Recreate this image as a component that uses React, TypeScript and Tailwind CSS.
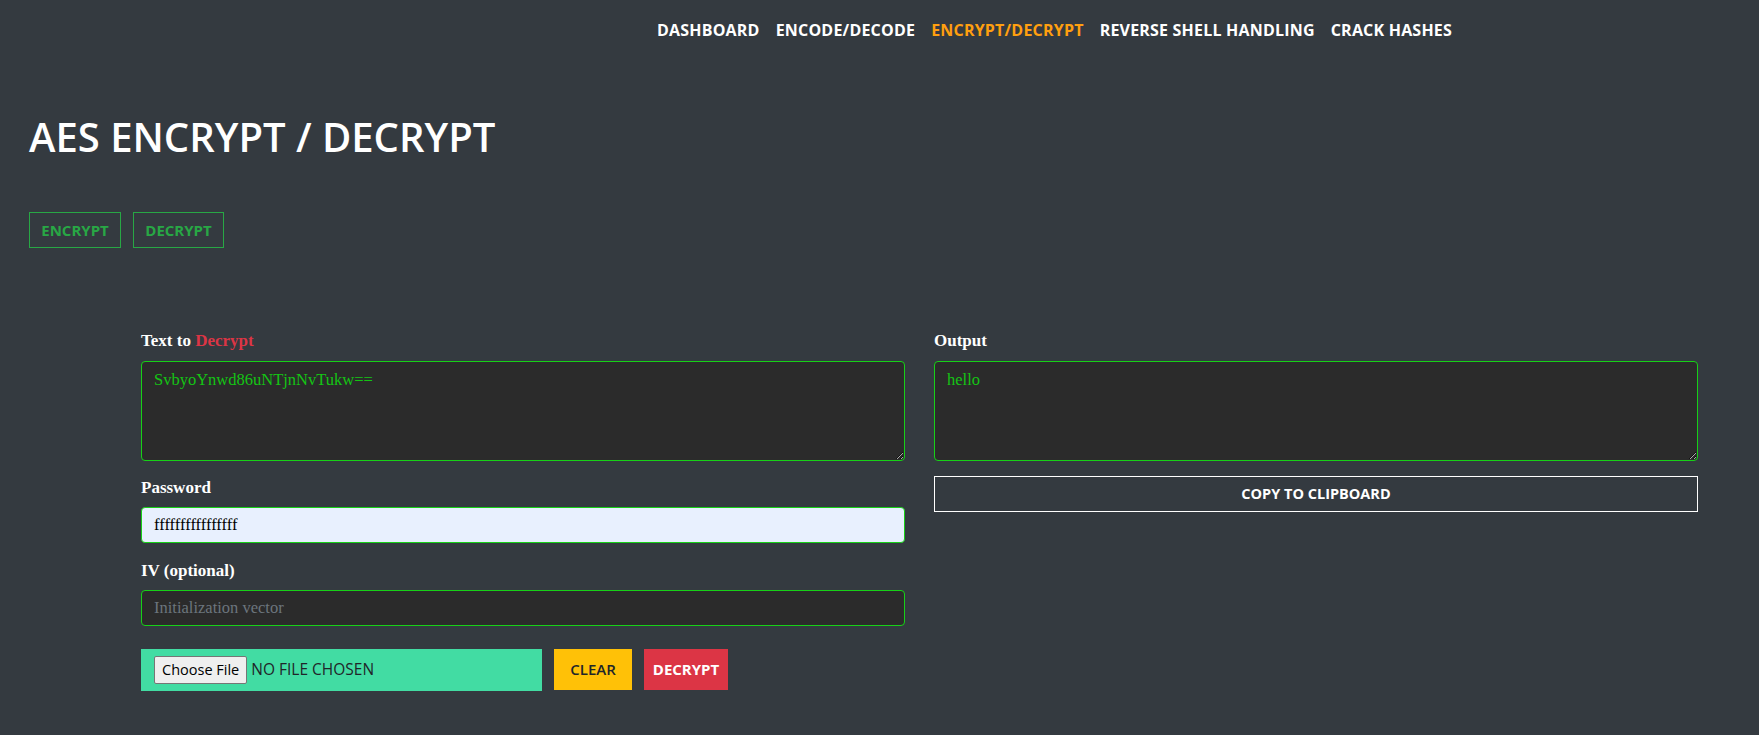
import React from 'react';

const sans = "font-['Open_Sans','Noto_Sans',sans-serif]";
const serif = "font-['Liberation_Serif','DejaVu_Serif',serif]";

const navItems = [
  { label: 'Dashboard', active: false },
  { label: 'Encode/Decode', active: false },
  { label: 'Encrypt/Decrypt', active: true },
  { label: 'Reverse Shell Handling', active: false },
  { label: 'Crack Hashes', active: false },
];

function Label({ children }: { children: React.ReactNode }) {
  return (
    <label className={`${serif} block text-[17px] leading-[24px] font-bold text-white`}>
      {children}
    </label>
  );
}

export default function App() {
  return (
    <div className={`${sans} min-h-[735px] bg-[#343a40] text-white`}>
      {/* Top nav */}
      <nav className="flex h-[60px] items-center gap-[16px] pl-[657px]">
        {navItems.map((item) => (
          <a
            key={item.label}
            href="#"
            className={`text-[16px] leading-[24px] font-bold tracking-[0.2px] uppercase ${
              item.active ? 'text-[#ff9f0f]' : 'text-white'
            }`}
          >
            {item.label}
          </a>
        ))}
      </nav>

      <div className="pl-[29px]">
        <h1 className="mt-[53px] text-[40px] leading-[48px] font-semibold uppercase">
          AES Encrypt / Decrypt
        </h1>

        {/* Mode buttons */}
        <div className="mt-[51px] flex gap-[12px]">
          <button className="h-[36px] w-[92px] border border-[#28a745] text-[15px] font-bold text-[#28a745] uppercase">
            Encrypt
          </button>
          <button className="h-[36px] w-[91px] border border-[#28a745] text-[15px] font-bold text-[#28a745] uppercase">
            Decrypt
          </button>
        </div>
      </div>

      {/* Form */}
      <div className="mt-[81px] ml-[141px] grid w-[1557px] grid-cols-2 gap-x-[29px]">
        <div className="flex flex-col">
          <Label>
            Text to <span className="text-[#dc3545]">Decrypt</span>
          </Label>
          <textarea
            readOnly
            defaultValue="SvbyoYnwd86uNTjnNvTukw=="
            className={`${serif} mt-[8px] h-[100px] rounded-[4px] border border-[#17d017] bg-[#2b2b2b] px-[12px] py-[6px] text-[16.5px] leading-[24px] text-[#14c414] outline-none`}
          />

          <div className="mt-[15px]">
            <Label>Password</Label>
          </div>
          <input
            readOnly
            value="ffffffffffffffff"
            className={`${serif} mt-[7px] h-[36px] rounded-[4px] border border-[#17d017] bg-[#e8f0fe] px-[12px] text-[16.5px] text-black outline-none`}
          />

          <div className="mt-[16px]">
            <Label>IV (optional)</Label>
          </div>
          <input
            readOnly
            placeholder="Initialization vector"
            className={`${serif} mt-[7px] h-[36px] rounded-[4px] border border-[#17d017] bg-[#2b2b2b] px-[12px] text-[16.5px] text-white outline-none placeholder:text-[#6c757d]`}
          />

          {/* File + actions */}
          <div className="mt-[23px] flex gap-[12px]">
            <div className="flex h-[42px] w-[401px] items-center bg-[#42dca3] pl-[13px]">
              <span className="flex h-[28px] items-center rounded-[2px] border border-[#767676] bg-[#efefef] px-[7px] text-[14.5px] text-black">
                Choose File
              </span>
              <span className="ml-[4px] text-[15.5px] text-[#212529] uppercase">No file chosen</span>
            </div>
            <button className="h-[41px] w-[78px] bg-[#ffc107] text-[15px] font-semibold text-[#212529] uppercase">
              Clear
            </button>
            <button className="h-[41px] w-[84px] bg-[#dc3545] text-[15px] font-bold text-white uppercase">
              Decrypt
            </button>
          </div>
        </div>

        <div className="flex flex-col">
          <Label>Output</Label>
          <textarea
            readOnly
            defaultValue="hello"
            className={`${serif} mt-[8px] h-[100px] rounded-[4px] border border-[#17d017] bg-[#2b2b2b] px-[12px] py-[6px] text-[16.5px] leading-[24px] text-[#14c414] outline-none`}
          />
          <button className="mt-[15px] h-[36px] border border-white text-[14.5px] font-bold text-white uppercase">
            Copy to Clipboard
          </button>
        </div>
      </div>
    </div>
  );
}
